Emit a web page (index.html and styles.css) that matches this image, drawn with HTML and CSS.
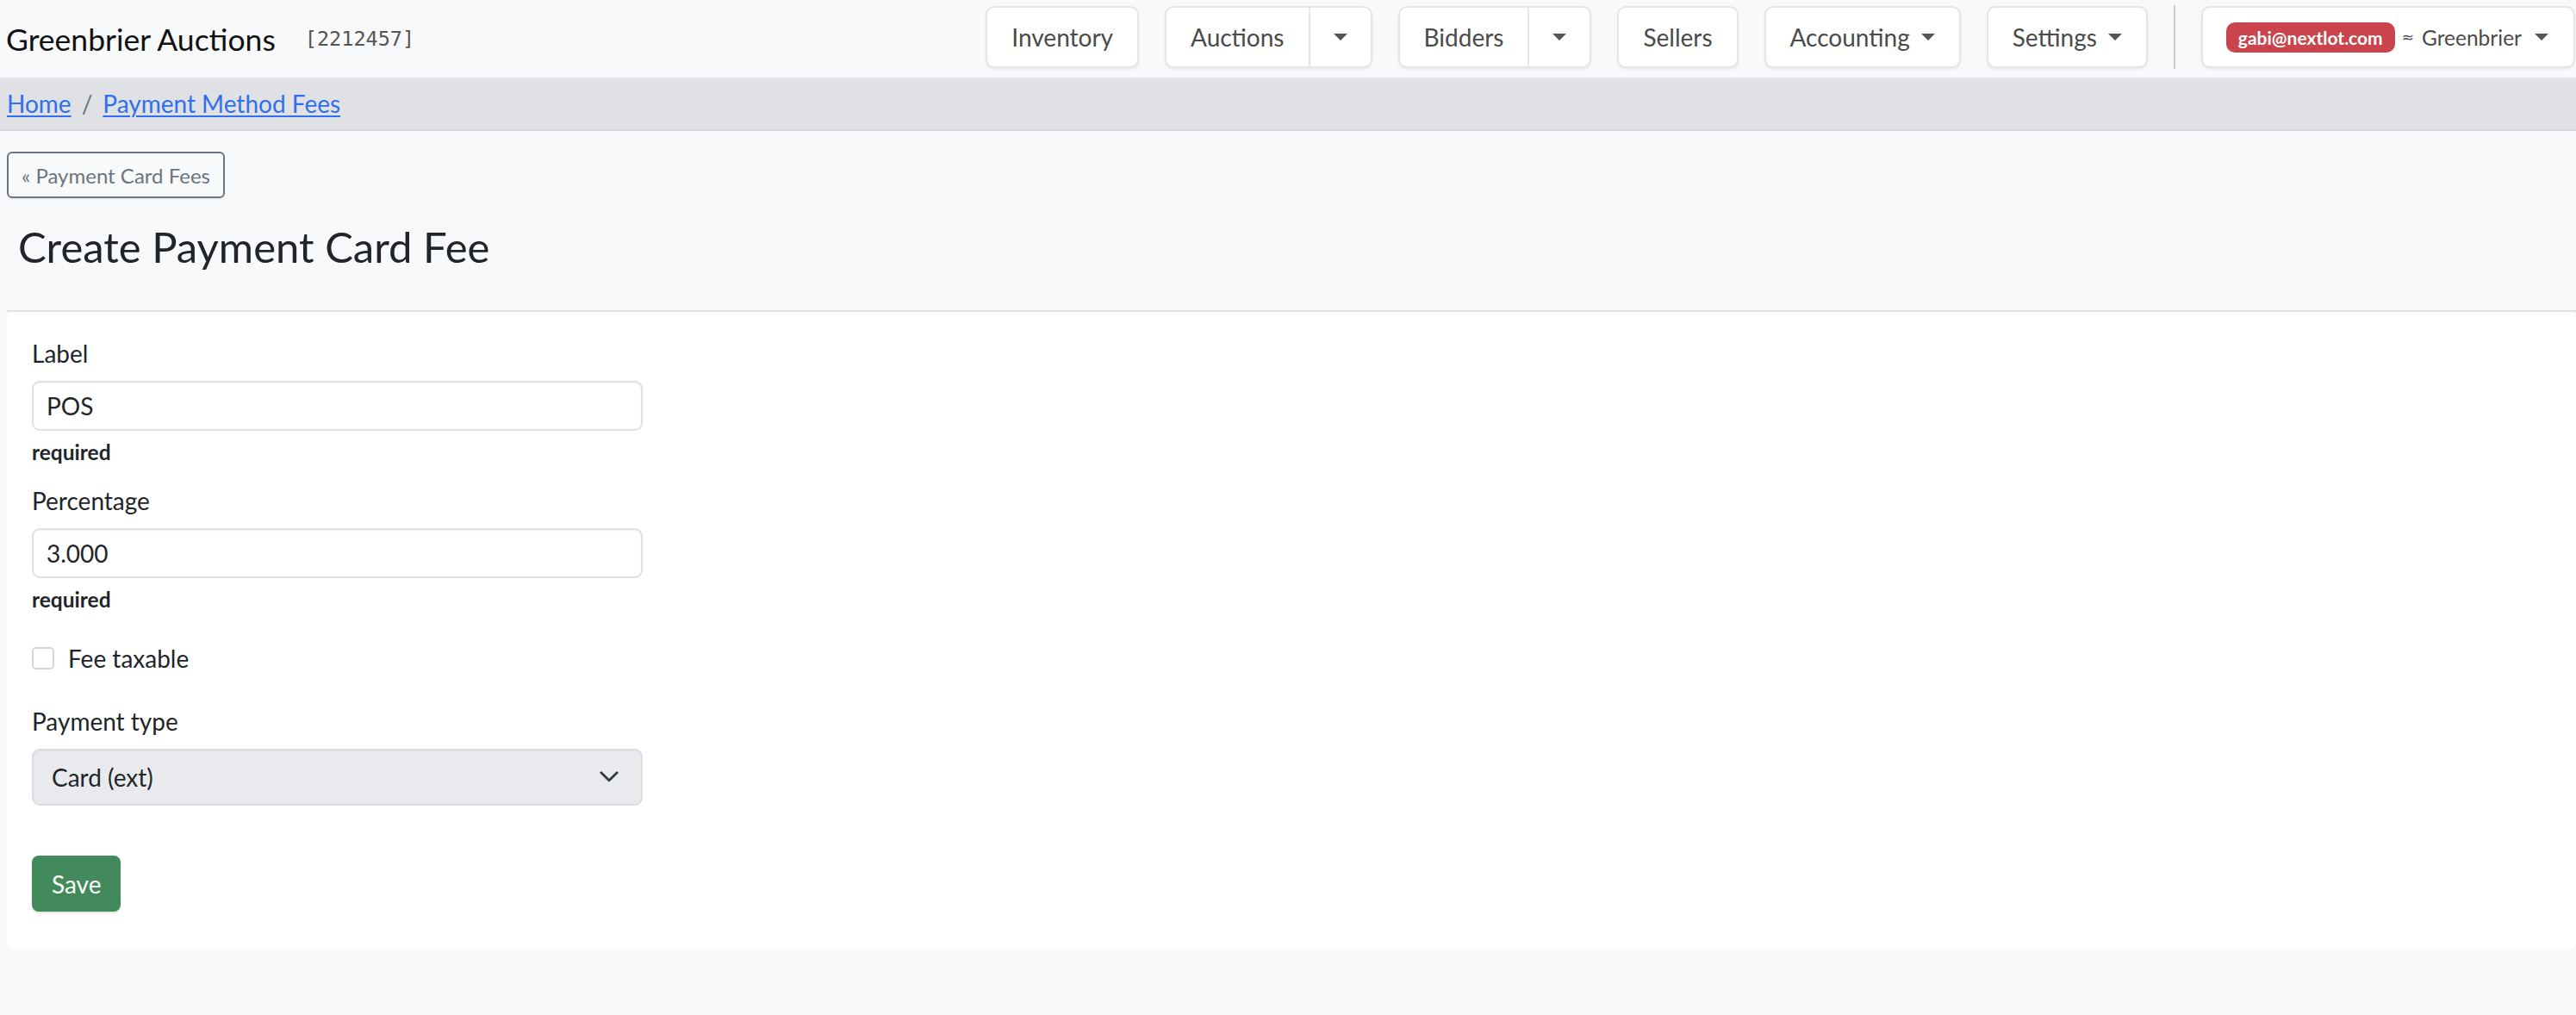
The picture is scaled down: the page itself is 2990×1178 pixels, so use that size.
FILE: index.html
```html
<!DOCTYPE html>
<html lang="en">
<head>
<meta charset="utf-8">
<title>Create Payment Card Fee</title>
<link rel="stylesheet" href="styles.css">
</head>
<body>
  <header class="topbar">
    <div class="brand">
      <span class="brand-name">Greenbrier Auctions</span>
      <span class="brand-id">[2212457]</span>
    </div>
    <nav class="mainnav">
      <a class="nav-btn" href="#">Inventory</a>
      <div class="btn-group">
        <a class="nav-btn" href="#">Auctions</a>
        <a class="nav-btn split" href="#"><span class="caret"></span></a>
      </div>
      <div class="btn-group">
        <a class="nav-btn" href="#">Bidders</a>
        <a class="nav-btn split" href="#"><span class="caret"></span></a>
      </div>
      <a class="nav-btn" href="#">Sellers</a>
      <a class="nav-btn" href="#">Accounting <span class="caret"></span></a>
      <a class="nav-btn" href="#">Settings <span class="caret"></span></a>
      <span class="nav-divider"></span>
      <a class="nav-btn user" href="#">
        <span class="badge">gabi@nextlot.com</span>
        <span class="org-mark">≈</span>
        <span class="org">Greenbrier</span>
        <span class="caret"></span>
      </a>
    </nav>
  </header>

  <div class="crumbs">
    <a href="#">Home</a>
    <span class="sep">/</span>
    <a href="#">Payment Method Fees</a>
  </div>

  <main class="page">
    <div class="toolbar">
      <a class="back-btn" href="#">« Payment Card Fees</a>
    </div>
    <div class="page-head">
      <h1>Create Payment Card Fee</h1>
    </div>

    <form class="card">
      <div class="field">
        <label class="field-label" for="fee-label">Label</label>
        <input class="text-input" id="fee-label" type="text" value="POS">
        <div class="req">required</div>
      </div>
      <div class="field">
        <label class="field-label" for="fee-pct">Percentage</label>
        <input class="text-input" id="fee-pct" type="text" value="3.000">
        <div class="req">required</div>
      </div>
      <label class="check">
        <span class="check-box"></span>
        <span>Fee taxable</span>
      </label>
      <div class="field-select">
        <label class="field-label" for="fee-type">Payment type</label>
        <div class="select-wrap">
          <select class="select" id="fee-type">
            <option>Card (ext)</option>
          </select>
          <svg class="chevron" width="22" height="13" viewBox="0 0 22 13" aria-hidden="true">
            <polyline points="1.8,1.8 11,10.8 20.2,1.8" fill="none" stroke="#343a40" stroke-width="2.8" stroke-linecap="round" stroke-linejoin="round"/>
          </svg>
        </div>
      </div>
      <button class="btn-save" type="button">Save</button>
    </form>
  </main>
</body>
</html>
```
FILE: styles.css
```css
html, body {
  margin: 0;
  background: #f8f9fa;
}

body {
  font-family: Lato, "Noto Sans", sans-serif;
  color: #212529;
}

/* ---------- top bar ---------- */
.topbar {
  display: flex;
  align-items: center;
  height: 90px;
  box-sizing: border-box;
  padding: 0 1px 4px 7px;
}

.brand {
  display: flex;
  align-items: center;
  gap: 34px;
  margin-top: 4px;
}

.brand-name {
  font-size: 35.5px;
  color: #111;
}

.brand-id {
  font-family: "DejaVu Sans Mono", "Liberation Mono", monospace;
  font-size: 23.5px;
  color: #555;
}

.mainnav {
  margin-left: auto;
  display: flex;
  align-items: center;
  gap: 30px;
}

.nav-btn {
  display: flex;
  align-items: center;
  gap: 13px;
  height: 72px;
  box-sizing: border-box;
  padding: 0 28px;
  background: #fff;
  border: 2px solid #e4e5e7;
  border-radius: 10px;
  box-shadow: 0 2px 3px rgba(0, 0, 0, 0.06);
  font-size: 28px;
  color: #4a4a4a;
  text-decoration: none;
  white-space: nowrap;
}

.btn-group {
  display: flex;
  border-radius: 10px;
  box-shadow: 0 2px 3px rgba(0, 0, 0, 0.06);
}

.btn-group .nav-btn {
  box-shadow: none;
}

.btn-group .nav-btn:first-child {
  border-right: 0;
  border-top-right-radius: 0;
  border-bottom-right-radius: 0;
}

.btn-group .split {
  padding: 0 27px;
  border-top-left-radius: 0;
  border-bottom-left-radius: 0;
}

.caret {
  display: inline-block;
  width: 0;
  height: 0;
  border-top: 8px solid #555;
  border-left: 8px solid transparent;
  border-right: 8px solid transparent;
}

.nav-divider {
  width: 2px;
  height: 74px;
  background: #c9cacc;
}

.nav-btn.user {
  gap: 0;
  padding: 0 29px 0 27px;
}

.badge {
  display: inline-flex;
  align-items: center;
  height: 35px;
  padding: 0 14px;
  border-radius: 10px;
  background: #c9444c;
  color: #fff;
  font-size: 21px;
  font-weight: 700;
}

.org-mark {
  margin-left: 8px;
  font-family: "DejaVu Sans", sans-serif;
  font-size: 17px;
  color: #4a4a4a;
}

.org {
  margin-left: 9px;
  font-size: 24.5px;
  color: #4a4a4a;
}

.user .caret {
  margin-left: 15px;
}

/* ---------- breadcrumb ---------- */
.crumbs {
  display: flex;
  align-items: center;
  height: 60px;
  padding-left: 8px;
  background: #e0e1e4;
  border-bottom: 2px solid #d3d6d9;
  font-size: 28px;
}

.crumbs a {
  color: #2f6fed;
  text-decoration: underline;
  text-underline-offset: 3px;
  text-decoration-thickness: 2px;
}

.crumbs .sep {
  margin: 0 12px;
  color: #6c757d;
}

/* ---------- page ---------- */
.page {
  padding: 24px 0 0 8px;
}

.toolbar {
  display: flex;
}

.back-btn {
  display: inline-flex;
  align-items: center;
  height: 54px;
  box-sizing: border-box;
  padding: 0 15px;
  border: 2px solid #6c757d;
  border-radius: 6px;
  font-size: 24px;
  color: #6c757d;
  text-decoration: none;
  box-shadow: 0 2px 2px rgba(0, 0, 0, 0.05);
}

.page-head {
  padding: 27px 0 44px 13px;
  border-bottom: 2px solid #dee2e6;
}

.page-head h1 {
  margin: 0;
  font-size: 49px;
  font-weight: 400;
  line-height: 1.2;
  color: #212529;
}

/* ---------- form card ---------- */
.card {
  display: flex;
  flex-direction: column;
  align-items: flex-start;
  padding: 27px 29px 43px;
  background: #fff;
  border-radius: 8px;
}

.field {
  margin-bottom: 16px;
}

.field-label {
  display: block;
  margin-bottom: 11px;
  font-size: 28px;
  line-height: 1.5;
}

.text-input {
  display: block;
  width: 709px;
  height: 58px;
  box-sizing: border-box;
  padding: 0 15px;
  border: 2px solid #dee2e6;
  border-radius: 9px;
  background: #fff;
  box-shadow: inset 0 1px 2px rgba(0, 0, 0, 0.05);
  font-family: inherit;
  font-size: 28px;
  color: #212529;
  outline: none;
}

.req {
  margin-top: 7px;
  font-size: 24.5px;
  font-weight: 700;
  line-height: 1.5;
}

.check {
  display: flex;
  align-items: center;
  gap: 16px;
  margin: 13px 0 31px;
  font-size: 28px;
  line-height: 1.5;
}

.check-box {
  width: 26px;
  height: 26px;
  box-sizing: border-box;
  border: 2px solid #d3d6da;
  border-radius: 5px;
  background: #fff;
}

.select-wrap {
  position: relative;
  width: 709px;
}

.select {
  display: block;
  width: 100%;
  height: 66px;
  box-sizing: border-box;
  padding: 0 60px 0 21px;
  border: 2px solid #dcdde1;
  border-radius: 9px;
  background: #e9eaee;
  box-shadow: inset 0 1px 2px rgba(0, 0, 0, 0.04);
  appearance: none;
  -webkit-appearance: none;
  font-family: inherit;
  font-size: 28px;
  color: #212529;
  outline: none;
}

.chevron {
  position: absolute;
  right: 28px;
  top: 26px;
  pointer-events: none;
}

.btn-save {
  margin-top: 58px;
  height: 65px;
  padding: 0 23px;
  border: 0;
  border-radius: 8px;
  background: #428a5b;
  box-shadow: 0 2px 2px rgba(0, 0, 0, 0.1);
  font-family: inherit;
  font-size: 28px;
  color: #fff;
}
```
